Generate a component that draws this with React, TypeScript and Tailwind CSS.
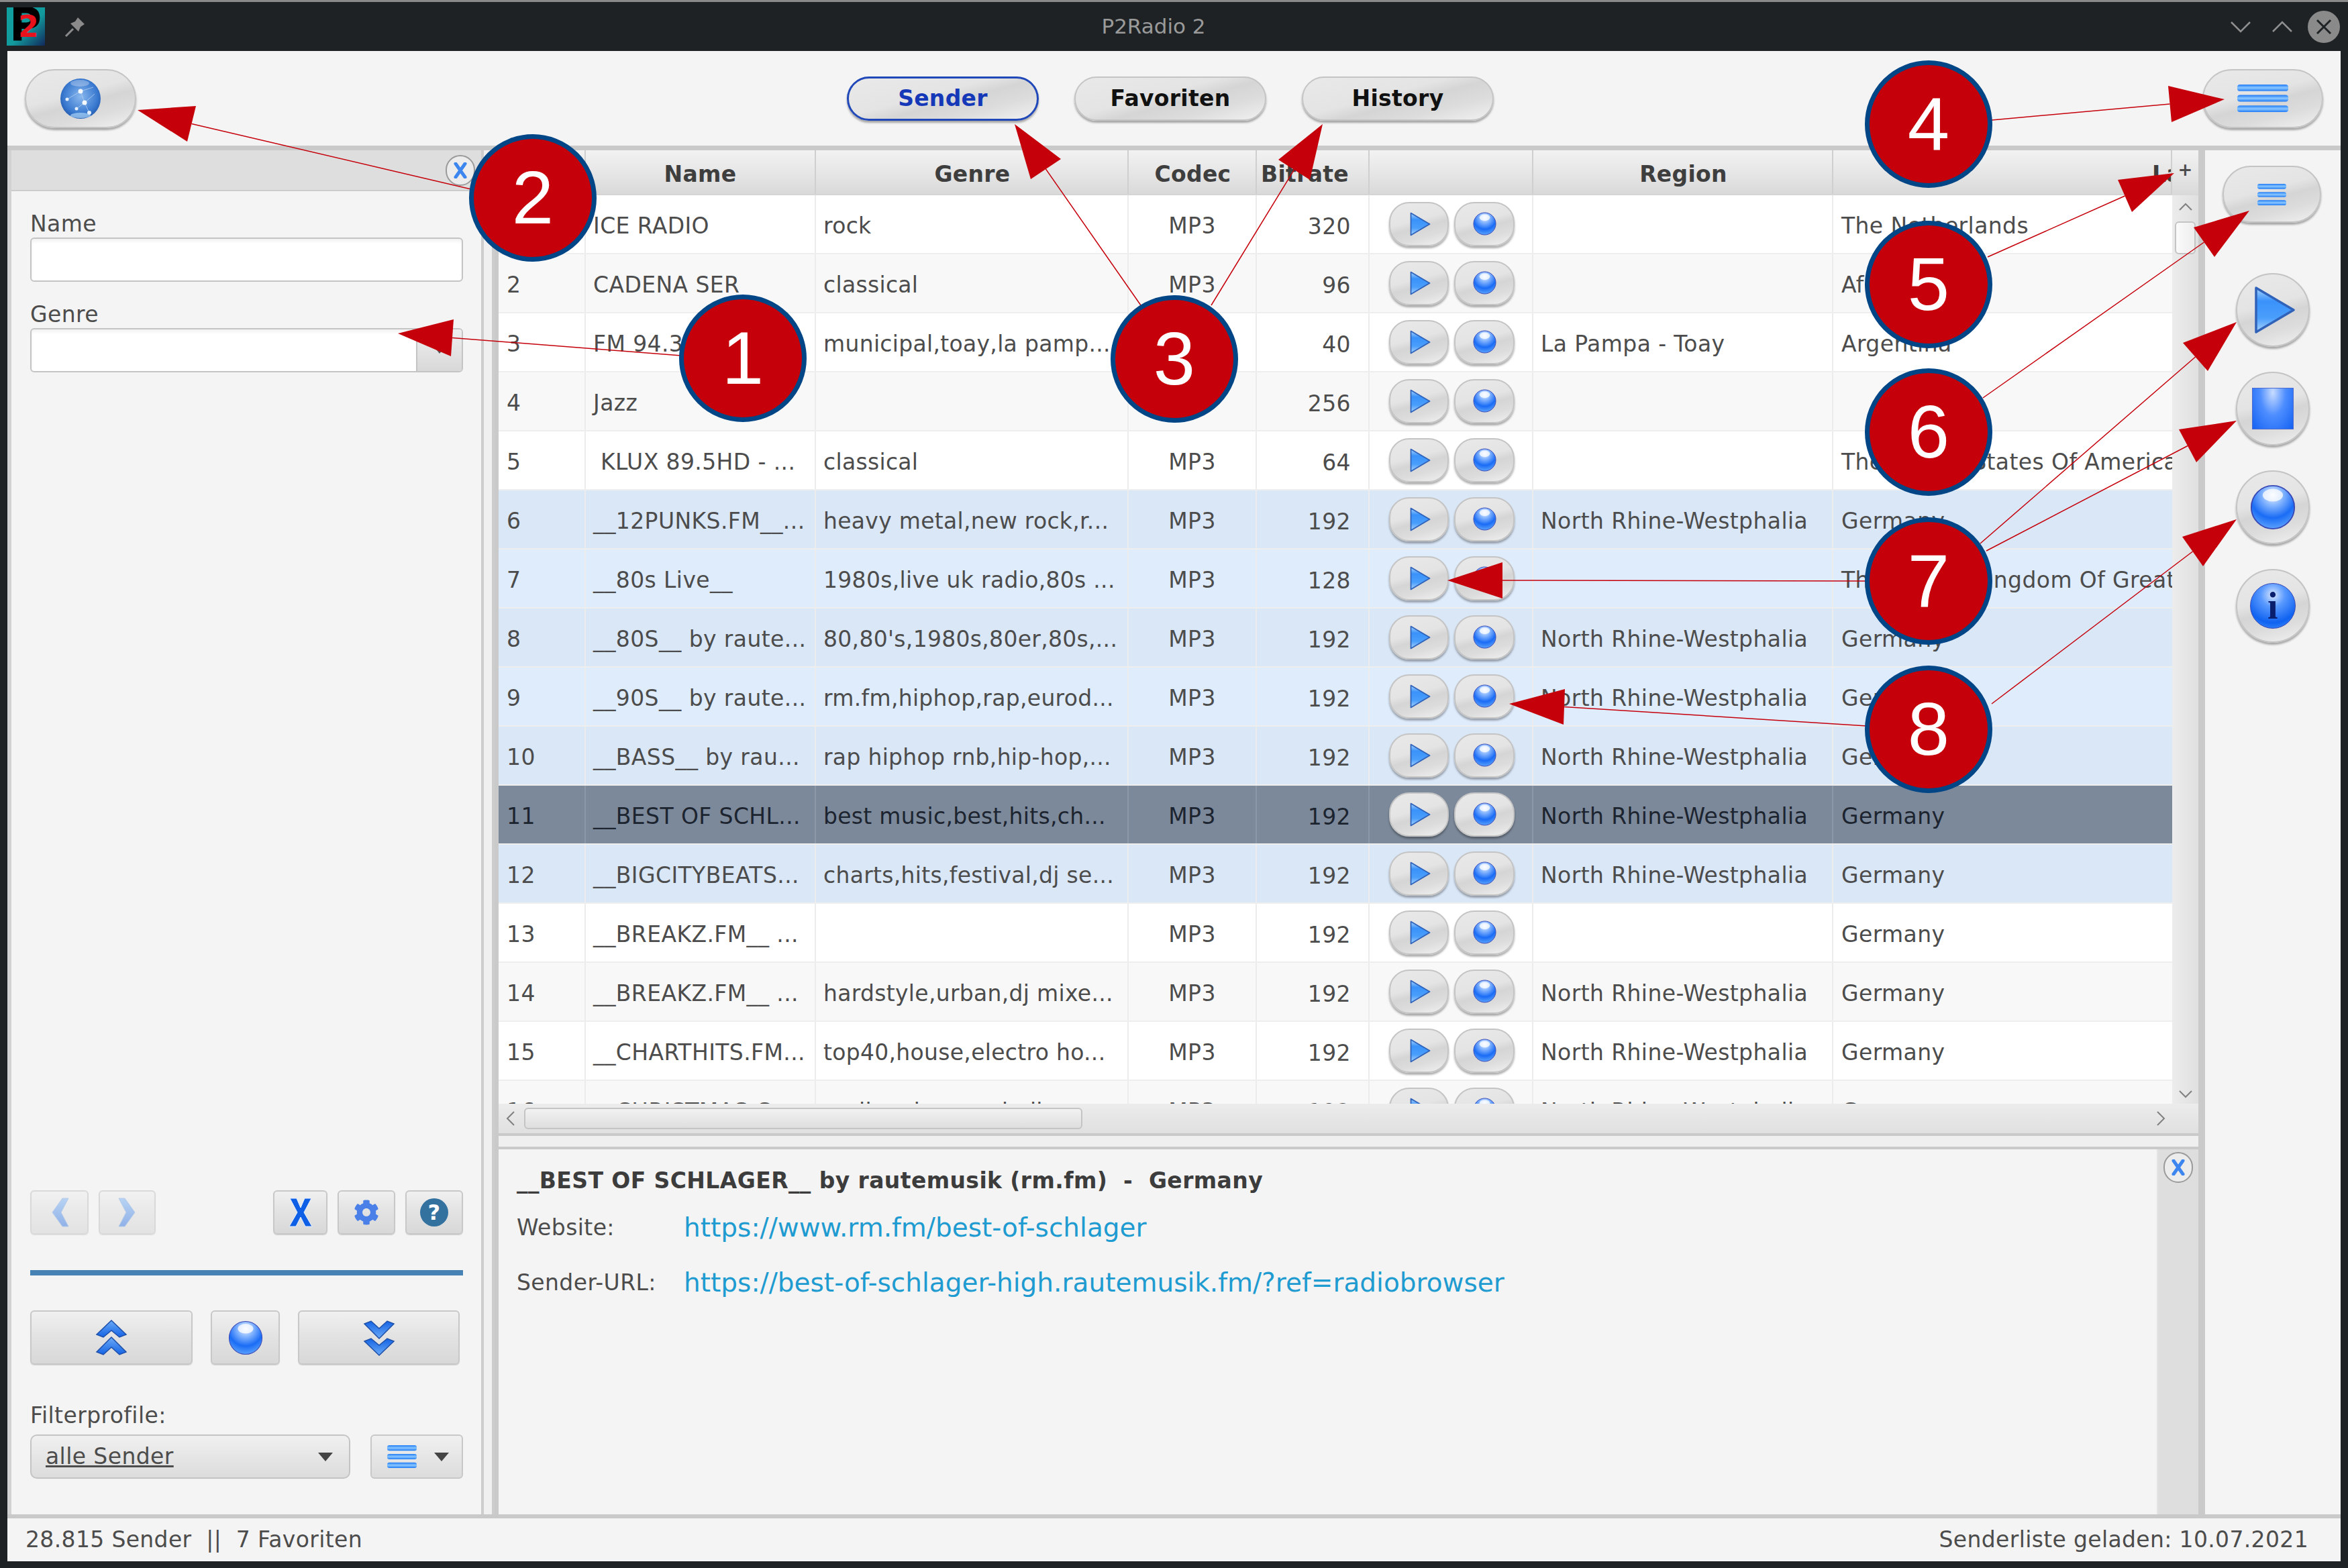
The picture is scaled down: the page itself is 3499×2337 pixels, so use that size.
import React from "react";
import { FaCog } from "react-icons/fa";

const F = "font-['DejaVu_Sans',sans-serif]";

const GLASS =
  "bg-[linear-gradient(165deg,#e9e9e9_0%,#e4e4e4_42%,#d5d5d5_56%,#dcdcdc_74%,#f1f1f1_100%)] border-2 border-[#c4c4c4] shadow-[0_3px_3px_rgba(0,0,0,0.32)]";
const SQUARE =
  "bg-[linear-gradient(180deg,#f0f0f0_0%,#e2e2e2_50%,#d8d8d8_100%)] border-2 border-[#c8c8c8] rounded-[6px] shadow-[0_1px_1px_rgba(0,0,0,0.15)] flex items-center justify-center";

function Defs() {
  return (
    <svg className="absolute w-0 h-0">
      <defs>
        <radialGradient id="ball" cx="50%" cy="22%" r="85%">
          <stop offset="0%" stopColor="#eef4ff" />
          <stop offset="28%" stopColor="#86b6ff" />
          <stop offset="62%" stopColor="#1a6cf5" />
          <stop offset="100%" stopColor="#6cb0ff" />
        </radialGradient>
        <radialGradient id="globe" cx="50%" cy="45%" r="60%">
          <stop offset="0%" stopColor="#8ab8ee" />
          <stop offset="70%" stopColor="#3a7ad0" />
          <stop offset="100%" stopColor="#1d54a8" />
        </radialGradient>
        <linearGradient id="play" x1="0" y1="0" x2="0" y2="1">
          <stop offset="0%" stopColor="#a8d4ff" />
          <stop offset="30%" stopColor="#3a92fa" />
          <stop offset="68%" stopColor="#4a9efb" />
          <stop offset="100%" stopColor="#a8d4ff" />
        </linearGradient>
        <linearGradient id="bar" x1="0" y1="0" x2="0" y2="1">
          <stop offset="0%" stopColor="#1f7bf5" />
          <stop offset="50%" stopColor="#8cc8ff" />
          <stop offset="100%" stopColor="#1f7bf5" />
        </linearGradient>
        <linearGradient id="chev" x1="0" y1="0" x2="0" y2="1">
          <stop offset="0%" stopColor="#6aaaf7" />
          <stop offset="100%" stopColor="#1463e4" />
        </linearGradient>
        <linearGradient id="teal" x1="0" y1="0" x2="1" y2="1">
          <stop offset="0%" stopColor="#10a0a0" />
          <stop offset="55%" stopColor="#129a9c" />
          <stop offset="100%" stopColor="#12285c" />
        </linearGradient>
      </defs>
    </svg>
  );
}

function Ball({ s = 35, className = "" }: { s?: number; className?: string }) {
  return (
    <svg width={s} height={s} viewBox="0 0 36 36" className={className}>
      <circle cx="18" cy="18" r="17" fill="url(#ball)" stroke="#3a48b4" strokeWidth="1" />
      <ellipse cx="18" cy="8.5" rx="8" ry="5" fill="#ffffff" opacity="0.75" />
    </svg>
  );
}

function Play({ w = 31, h = 36 }: { w?: number; h?: number }) {
  return (
    <svg width={w} height={h} viewBox="0 0 62 72">
      <path d="M3 3 L59 36 L3 69 Z" fill="url(#play)" stroke="#2f62b8" strokeWidth="3.5" strokeLinejoin="round" />
    </svg>
  );
}

function Bars({ w, h }: { w: number; h: number }) {
  const bh = h * 0.24;
  return (
    <svg width={w} height={h} viewBox={`0 0 ${w} ${h}`} preserveAspectRatio="none">
      {[0, (h - bh) / 2, h - bh].map((y) => (
        <rect key={y} x="0" y={y} width={w} height={bh} rx={bh / 2.5} fill="url(#bar)" />
      ))}
    </svg>
  );
}

function CloseSmall({ className = "" }: { className?: string }) {
  return (
    <div className={"w-[44px] h-[46px] rounded-full border-2 border-[#9a9a9a] bg-[#ececec] flex items-center justify-center " + className}>
      <svg width="20" height="24" viewBox="0 0 20 24">
        <path d="M3 2 L17 22 M17 2 L3 22" stroke="#3d86ef" strokeWidth="5" strokeLinecap="round" />
      </svg>
    </div>
  );
}

function Chevron({ dir, pale }: { dir: "l" | "r"; pale?: boolean }) {
  return (
    <svg width="28" height="46" viewBox="0 0 28 46" className={pale ? "opacity-70" : ""}>
      <path
        d={dir === "l" ? "M18 2 L27 2 L16 23 L27 44 L18 44 L3 23 Z" : "M10 2 L1 2 L12 23 L1 44 L10 44 L25 23 Z"}
        fill="url(#chev)"
        stroke="#6a9be0"
      />
    </svg>
  );
}

function DoubleChev({ up }: { up?: boolean }) {
  return (
    <svg width="48" height="54" viewBox="0 0 48 54" className={up ? "" : "rotate-180"}>
      <path d="M24 1 L46 22 L36 26 L24 16 L12 26 L2 22 Z" fill="url(#chev)" stroke="#1d4fa8" strokeWidth="1.5" />
      <path d="M24 26 L46 48 L36 52 L24 41 L12 52 L2 48 Z" fill="url(#chev)" stroke="#1d4fa8" strokeWidth="1.5" />
    </svg>
  );
}

const DE = "North Rhine-Westphalia";
type Row = [string, string, string, string, string, string, string];
const rows: Row[] = [
  ["1", "ICE RADIO", "rock", "MP3", "320", "", "The Netherlands"],
  ["2", "CADENA SER", "classical", "MP3", "96", "", "Afghanistan"],
  ["3", "FM 94.3 Toay", "municipal,toay,la pamp...", "MP3", "40", "La Pampa - Toay", "Argentina"],
  ["4", "Jazz", "", "MP3", "256", "", ""],
  ["5", "\u00a0KLUX 89.5HD - ...", "classical", "MP3", "64", "", "The United States Of America"],
  ["6", "__12PUNKS.FM__...", "heavy metal,new rock,r...", "MP3", "192", DE, "Germany"],
  ["7", "__80s Live__", "1980s,live uk radio,80s ...", "MP3", "128", "", "The United Kingdom Of Great Britain"],
  ["8", "__80S__ by raute...", "80,80's,1980s,80er,80s,...", "MP3", "192", DE, "Germany"],
  ["9", "__90S__ by raute...", "rm.fm,hiphop,rap,eurod...", "MP3", "192", DE, "Germany"],
  ["10", "__BASS__ by rau...", "rap hiphop rnb,hip-hop,...", "MP3", "192", DE, "Germany"],
  ["11", "__BEST OF SCHL...", "best music,best,hits,ch...", "MP3", "192", DE, "Germany"],
  ["12", "__BIGCITYBEATS...", "charts,hits,festival,dj se...", "MP3", "192", DE, "Germany"],
  ["13", "__BREAKZ.FM__ ...", "", "MP3", "192", "", "Germany"],
  ["14", "__BREAKZ.FM__ ...", "hardstyle,urban,dj mixe...", "MP3", "192", DE, "Germany"],
  ["15", "__CHARTHITS.FM...", "top40,house,electro ho...", "MP3", "192", DE, "Germany"],
  ["16", "__CHRISTMAS C...", "mall,rock,xmas,bell...", "MP3", "192", DE, "Germany"],
];

function rowBg(n: number) {
  if (n === 11) return "bg-[#7c899a] text-[#1c2430]";
  const blue = n >= 6 && n <= 12;
  if (blue) return n % 2 === 0 ? "bg-[#dae7f7] text-[#4c4c4c]" : "bg-[#dfecfc] text-[#4c4c4c]";
  return n % 2 === 0 ? "bg-[#f8f8f8] text-[#4c4c4c]" : "bg-white text-[#4c4c4c]";
}

const LINE = "border-r-2 border-[#ececec]";

function TableRow({ r }: { r: Row }) {
  const n = Number(r[0]);
  const line = n === 11 ? "border-r-2 border-[#8c98a8]" : LINE;
  const cell = " h-full flex items-center pt-[5px] whitespace-pre overflow-hidden ";
  return (
    <div className={"flex h-[88px] shrink-0 items-center border-b-2 border-[#eeeeee] text-[33px] tracking-[0.4px] " + rowBg(n)}>
      <div className={"w-[130px] pl-[12px]" + cell + line}>{r[0]}</div>
      <div className={"w-[343px] pl-[11px]" + cell + line}>{r[1]}</div>
      <div className={"w-[466px] pl-[11px] tracking-[0.3px]" + cell + line}>{r[2]}</div>
      <div className={"w-[191px] justify-center" + cell + line}>{r[3]}</div>
      <div className={"w-[168px] justify-end pr-[26px] pt-[8px] h-full flex items-center " + line}>{r[4]}</div>
      <div className={"w-[244px] h-full flex items-center gap-[8px] pl-[29px] pb-[1px] " + line}>
        <div className={"w-[89px] h-[66px] rounded-[30px] flex items-center justify-center pl-[3px] " + GLASS}>
          <Play />
        </div>
        <div className={"w-[90px] h-[66px] rounded-[30px] flex items-center justify-center " + GLASS}>
          <Ball />
        </div>
      </div>
      <div className={"w-[447px] pl-[11px]" + cell + line}>{r[5]}</div>
      <div className={"flex-1 min-w-0 pl-[12px]" + cell}>{r[6]}</div>
    </div>
  );
}

const HEADBG = "bg-[linear-gradient(180deg,#f2f2f2_0%,#e4e4e4_60%,#d9d9d9_100%)]";
const HEAD = HEADBG + " border-r-2 border-[#cfcfcf] flex items-center h-full pt-[7px]";

function Header() {
  return (
    <div className="flex h-[67px] shrink-0 font-bold text-[33px] tracking-[0.3px] text-[#3e3e3e] border-b-2 border-[#d4d4d4]">
      <div className={"w-[130px] " + HEAD} />
      <div className={"w-[343px] justify-center " + HEAD}>Name</div>
      <div className={"w-[466px] justify-center pl-[2px] " + HEAD}>Genre</div>
      <div className={"w-[191px] justify-center pl-[2px] " + HEAD}>Codec</div>
      <div className={"w-[168px] justify-start pl-[6px] " + HEAD}>Bitrate</div>
      <div className={"w-[244px] " + HEAD} />
      <div className={"w-[447px] justify-center pl-[2px] " + HEAD}>Region</div>
      <div className={"flex-1 min-w-0 overflow-hidden pl-[475px] whitespace-nowrap " + HEAD}>Land</div>
    </div>
  );
}

type Arrow = { tip: [number, number]; a: [number, number]; b: [number, number]; tail: [number, number] };
const arrows: Arrow[] = [
  { tip: [593, 497], a: [676, 476], b: [672, 531], tail: [1015, 530] },
  { tip: [205, 164], a: [292, 158], b: [279, 211], tail: [702, 282] },
  { tip: [1512, 185], a: [1581, 237], b: [1536, 267], tail: [1700, 455] },
  { tip: [1971, 185], a: [1905, 238], b: [1952, 268], tail: [1805, 455] },
  { tip: [3315, 148], a: [3231, 128], b: [3236, 182], tail: [2968, 179] },
  { tip: [3240, 258], a: [3156, 268], b: [3177, 316], tail: [2962, 383] },
  { tip: [3352, 314], a: [3269, 339], b: [3300, 383], tail: [2955, 593] },
  { tip: [3333, 480], a: [3253, 511], b: [3290, 553], tail: [2951, 810] },
  { tip: [3333, 627], a: [3247, 640], b: [3273, 689], tail: [2960, 821] },
  { tip: [2157, 865], a: [2239, 838], b: [2239, 892], tail: [2782, 866] },
  { tip: [3333, 774], a: [3252, 800], b: [3283, 844], tail: [2968, 1049] },
  { tip: [2249, 1049], a: [2332, 1027], b: [2330, 1080], tail: [2782, 1082] },
];

const badges: [string, number, number][] = [
  ["1", 1107, 534],
  ["2", 794, 295],
  ["3", 1750, 535],
  ["4", 2874, 185],
  ["5", 2874, 424],
  ["6", 2874, 644],
  ["7", 2874, 866],
  ["8", 2874, 1087],
];

function Annotations() {
  return (
    <>
      <svg className="absolute left-0 top-0 pointer-events-none" width="3499" height="2337">
        {arrows.map((ar, i) => (
          <g key={i}>
            <line
              x1={ar.tail[0]}
              y1={ar.tail[1]}
              x2={(ar.a[0] + ar.b[0]) / 2}
              y2={(ar.a[1] + ar.b[1]) / 2}
              stroke="#c5000b"
              strokeWidth="1.5"
            />
            <polygon points={`${ar.tip.join(",")} ${ar.a.join(",")} ${ar.b.join(",")}`} fill="#c5000b" />
          </g>
        ))}
      </svg>
      {badges.map(([t, x, y]) => (
        <div
          key={t}
          style={{ left: x - 95, top: y - 95 }}
          className="absolute w-[190px] h-[190px] rounded-full bg-[#c5000b] border-[7px] border-[#004586] flex items-center justify-center text-white text-[112px] leading-none font-['Liberation_Sans',sans-serif]"
        >
          {t}
        </div>
      ))}
    </>
  );
}

export default function App() {
  return (
    <div className={"relative w-[3499px] h-[2337px] overflow-hidden bg-[#1e2225] flex flex-col " + F}>
      <Defs />
      {/* title bar */}
      <div className="h-[76px] shrink-0 flex items-center border-t-[3px] border-[#8a8a8a] relative pl-[10px] pr-[12px]">
        <svg width="57" height="57" viewBox="0 0 57 57">
          <rect width="57" height="57" fill="url(#teal)" />
          <text x="4" y="50" fontFamily="DejaVu Sans" fontWeight="bold" fontSize="70" textLength="48" lengthAdjust="spacingAndGlyphs" fill="#000">P</text>
          <text x="17" y="44" fontFamily="DejaVu Sans" fontWeight="bold" fontSize="44" fill="#e8121c">2</text>
        </svg>
        <svg width="34" height="34" viewBox="0 0 34 34" className="ml-[28px]">
          <path d="M21 3 L31 13 L25 17 L22 24 L10 12 L17 9 Z" fill="#8b8b8b" />
          <path d="M14 20 L3 31" stroke="#8b8b8b" strokeWidth="3" />
        </svg>
        <div className="flex-1 text-center text-[31px] text-[#9a9a9a] pr-[14px]">P2Radio 2</div>
        <div className="flex items-center">
          <svg width="32" height="20" viewBox="0 0 32 20"><path d="M2 3 L16 17 L30 3" fill="none" stroke="#8f8f8f" strokeWidth="2.5" /></svg>
          <svg width="32" height="20" viewBox="0 0 32 20" className="ml-[30px]"><path d="M2 17 L16 3 L30 17" fill="none" stroke="#8f8f8f" strokeWidth="2.5" /></svg>
          <div className="ml-[22px] w-[48px] h-[48px] rounded-full bg-[#8a8a8a] flex items-center justify-center">
            <svg width="26" height="26" viewBox="0 0 26 26"><path d="M3 3 L23 23 M23 3 L3 23" stroke="#1e2225" strokeWidth="3" /></svg>
          </div>
        </div>
      </div>

      <div className="mx-[11px] flex-1 min-h-0 bg-[#f4f4f4] flex flex-col">
        {/* toolbar */}
        <div className="h-[148px] shrink-0 flex items-center px-[26px] border-b-[7px] border-[#c9c9c9]">
          <div className={"w-[166px] h-[88px] rounded-[44px] flex items-center justify-center " + GLASS}>
            <svg width="62" height="62" viewBox="0 0 62 62">
              <circle cx="31" cy="31" r="30" fill="url(#globe)" />
              <path d="M11 32 L31 20 L37 37 L25 46 M31 20 L50 14 M37 37 L52 24 M37 37 L44 52" stroke="#bcd6f5" strokeWidth="1" opacity="0.7" fill="none" />
              <circle cx="31" cy="20" r="3.5" fill="#f4f8ff" />
              <circle cx="37" cy="37" r="3.5" fill="#f4f8ff" />
              <circle cx="11" cy="32" r="2.5" fill="#e4efff" />
              <circle cx="25" cy="46" r="2.5" fill="#e4efff" />
              <circle cx="44" cy="52" r="3" fill="#e4efff" />
              <ellipse cx="30" cy="8" rx="14" ry="5" fill="#ffffff" opacity="0.3" />
              <ellipse cx="31" cy="56" rx="15" ry="4" fill="#bfe4ff" opacity="0.6" />
            </svg>
          </div>
          <div className="ml-[1059px] flex gap-[53px] font-bold text-[33px] tracking-[0.3px] text-[#111111]">
            <div className={"w-[286px] h-[66px] rounded-[33px] flex items-center justify-center text-[#1538b8] " + GLASS + " !border-[3px] !border-[#2048b8]"}>Sender</div>
            <div className={"w-[286px] h-[66px] rounded-[33px] flex items-center justify-center " + GLASS}>Favoriten</div>
            <div className={"w-[286px] h-[66px] rounded-[33px] flex items-center justify-center " + GLASS}>History</div>
          </div>
          <div className={"ml-auto w-[180px] h-[88px] rounded-[44px] flex items-center justify-center " + GLASS}>
            <Bars w={76} h={41} />
          </div>
        </div>

        {/* main */}
        <div className="flex-1 min-h-0 flex text-[#4c4c4c] text-[33px] tracking-[0.4px]">
          {/* left panel */}
          <div className="w-[706px] shrink-0 border-l-[6px] border-[#d2d2d2] flex flex-col">
            <div className="h-[61px] shrink-0 bg-[#dedede] border-b-2 border-[#cccccc] flex items-center justify-end pr-[9px]">
              <CloseSmall />
            </div>
            <div className="flex-1 min-h-0 flex flex-col pl-[28px] pr-[27px] pb-[53px]">
              <div className="mt-[29px] h-[40px] leading-[40px]">Name</div>
              <div className="h-[66px] rounded-[6px] border-2 border-[#c4c4c4] bg-white shadow-[inset_0_4px_4px_rgba(0,0,0,0.05)]" />
              <div className="mt-[29px] h-[40px] leading-[40px]">Genre</div>
              <div className="h-[66px] rounded-[6px] border-2 border-[#c4c4c4] bg-white shadow-[inset_0_4px_4px_rgba(0,0,0,0.05)] flex justify-end overflow-hidden">
                <div className="w-[68px] h-full border-l-2 border-[#c4c4c4] bg-[linear-gradient(180deg,#efefef,#d8d8d8)] flex items-center justify-center">
                  <div className="w-0 h-0 border-x-[8px] border-x-transparent border-t-[10px] border-t-[#555555]" />
                </div>
              </div>

              <div className="mt-auto flex">
                <div className={"w-[87px] h-[66px] opacity-60 " + SQUARE}><Chevron dir="l" pale /></div>
                <div className={"ml-[15px] w-[85px] h-[66px] opacity-60 " + SQUARE}><Chevron dir="r" pale /></div>
                <div className={"ml-auto w-[81px] h-[66px] " + SQUARE}>
                  <svg width="38" height="44" viewBox="0 0 38 44">
                    <path d="M3 1 L13 1 L19 15 L25 1 L35 1 L24 22 L36 43 L26 43 L19 29 L12 43 L2 43 L14 22 Z" fill="#0e5fe6" stroke="#eaf2ff" strokeWidth="1" />
                  </svg>
                </div>
                <div className={"ml-[15px] w-[86px] h-[66px] " + SQUARE}>
                  <FaCog className="text-[#4a80e8] w-[38px] h-[42px]" />
                </div>
                <div className={"ml-[15px] w-[86px] h-[66px] " + SQUARE}>
                  <div className="w-[42px] h-[42px] rounded-full bg-[#33719f] text-white font-bold text-[32px] leading-[42px] text-center">?</div>
                </div>
              </div>

              <div className="mt-[53px] h-[8px] bg-[#4682b4] shrink-0" />

              <div className="mt-[52px] flex gap-[27px]">
                <div className={"w-[242px] h-[81px] " + SQUARE}><DoubleChev up /></div>
                <div className={"w-[103px] h-[81px] " + SQUARE}>
                  <svg width="52" height="52" viewBox="0 0 36 36">
                    <circle cx="18" cy="18" r="17" fill="url(#ball)" stroke="#3a48b4" strokeWidth="0.7" />
                    <ellipse cx="18" cy="8.5" rx="8" ry="5" fill="#ffffff" opacity="0.75" />
                  </svg>
                </div>
                <div className={"w-[241px] h-[81px] " + SQUARE}><DoubleChev /></div>
              </div>

              <div className="mt-[56px] h-[40px] leading-[40px]">Filterprofile:</div>
              <div className="mt-[8px] flex justify-between">
                <div className="w-[477px] h-[66px] rounded-[10px] border-2 border-[#c4c4c4] bg-[linear-gradient(180deg,#f0f0f0,#dcdcdc)] flex items-center pl-[21px] pr-[24px]">
                  <span className="underline underline-offset-2">alle Sender</span>
                  <div className="ml-auto w-0 h-0 border-x-[11px] border-x-transparent border-t-[13px] border-t-[#444444]" />
                </div>
                <div className="w-[138px] h-[66px] rounded-[6px] border-2 border-[#c8c8c8] bg-[linear-gradient(180deg,#f0f0f0,#dcdcdc)] flex items-center pl-[23px]">
                  <Bars w={44} h={34} />
                  <div className="ml-[26px] w-0 h-0 border-x-[11px] border-x-transparent border-t-[13px] border-t-[#444444]" />
                </div>
              </div>
            </div>
          </div>

          {/* splitter */}
          <div className="w-[20px] shrink-0 bg-[#f0f0f0] border-l-[4px] border-r-[4px] border-[#cdcdcd]" />

          {/* center */}
          <div className="w-[2549px] shrink-0 flex flex-col border-l-[6px] border-r-[10px] border-[#cacaca]">
            <div className="h-[1465px] shrink-0 flex flex-col">
              <div className="flex-1 min-h-0 flex">
                <div className="w-[2494px] shrink-0 flex flex-col overflow-hidden">
                  <Header />
                  {rows.map((r) => (
                    <TableRow key={r[0]} r={r} />
                  ))}
                </div>
                <div className="flex-1 min-h-0 flex flex-col bg-[linear-gradient(90deg,#ececec,#e0e0e0)] items-center">
                  <div className={"w-full h-[67px] shrink-0 flex justify-center pt-[16px] text-[#4c4c4c] font-bold text-[26px] leading-[26px] " + HEADBG}>+</div>
                  <svg width="22" height="14" viewBox="0 0 22 14" className="mt-[10px] shrink-0"><path d="M2 12 L11 3 L20 12" fill="none" stroke="#808080" strokeWidth="2" /></svg>
                  <div className="mt-[15px] w-[31px] h-[49px] shrink-0 rounded-[6px] border-2 border-[#c4c4c4] bg-[linear-gradient(90deg,#fafafa,#eeeeee)]" />
                  <svg width="22" height="14" viewBox="0 0 22 14" className="mt-auto mb-[7px] shrink-0"><path d="M2 2 L11 11 L20 2" fill="none" stroke="#808080" strokeWidth="2" /></svg>
                </div>
              </div>
              <div className="h-[44px] shrink-0 bg-[linear-gradient(180deg,#ececec,#e0e0e0)] flex items-center pl-[10px] pr-[48px]">
                <svg width="16" height="24" viewBox="0 0 16 24"><path d="M13 2 L3 12 L13 22" fill="none" stroke="#808080" strokeWidth="2" /></svg>
                <div className="ml-[12px] w-[832px] h-[32px] rounded-[6px] border-2 border-[#c4c4c4] bg-[linear-gradient(180deg,#f2f2f2,#dedede)]" />
                <svg width="16" height="24" viewBox="0 0 16 24" className="ml-auto"><path d="M3 2 L13 12 L3 22" fill="none" stroke="#808080" strokeWidth="2" /></svg>
              </div>
            </div>
            <div className="h-[24px] shrink-0 bg-[#efefef] border-y-[4px] border-[#c9c9c9]" />
            <div className="flex-1 min-h-0 flex">
              <div className="w-[2473px] shrink-0 pl-[27px] pt-[27px] border-r-2 border-[#e4e4e4]">
                <div className="font-bold h-[40px] leading-[40px] whitespace-pre text-[#3c3c3c]">__BEST OF SCHLAGER__ by rautemusik (rm.fm)  -  Germany</div>
                <div className="mt-[28px] flex items-center h-[44px]">
                  <span className="w-[249px] shrink-0">Website:</span>
                  <span className="text-[#1e9bd0] text-[39px] tracking-normal">https://www.rm.fm/best-of-schlager</span>
                </div>
                <div className="mt-[38px] flex items-center h-[44px]">
                  <span className="w-[249px] shrink-0">Sender-URL:</span>
                  <span className="text-[#1e9bd0] text-[39px] tracking-normal">https://best-of-schlager-high.rautemusik.fm/?ref=radiobrowser</span>
                </div>
              </div>
              <div className="flex-1 bg-[#dedede] flex justify-center pt-[4px]">
                <CloseSmall />
              </div>
            </div>
          </div>

          {/* right sidebar */}
          <div className="flex-1 min-w-0 flex flex-col items-center pt-[23px] gap-[37px]">
            <div className={"w-[147px] h-[85px] rounded-[42px] mb-[38px] mr-[4px] flex items-center justify-center " + GLASS}>
              <Bars w={43} h={32} />
            </div>
            <div className={"w-[110px] h-[110px] rounded-full flex items-center justify-center pl-[6px] " + GLASS}>
              <Play w={64} h={72} />
            </div>
            <div className={"w-[110px] h-[110px] rounded-full flex items-center justify-center " + GLASS}>
              <div className="w-[62px] h-[62px] bg-[radial-gradient(ellipse_at_50%_10%,#c8dcff_0%,#4d8dff_45%,#1462f2_100%)] border border-[#4a6ad0]" />
            </div>
            <div className={"w-[110px] h-[110px] rounded-full flex items-center justify-center " + GLASS}>
              <Ball s={68} />
            </div>
            <div className={"w-[110px] h-[110px] rounded-full flex items-center justify-center " + GLASS}>
              <div className="relative w-[68px] h-[68px] rounded-full bg-[radial-gradient(circle_at_50%_25%,#d8e6ff_0%,#5a9aff_30%,#0f62f0_70%,#4f9dff_100%)] border border-[#3a48b4] flex items-center justify-center text-[#0a1e6e] font-bold text-[56px] leading-none font-['Liberation_Serif',serif]">
                i
              </div>
            </div>
          </div>
        </div>

        {/* status */}
        <div className="h-[70px] shrink-0 border-t-[6px] border-[#c9c9c9] flex items-center justify-between pl-[27px] pr-[48px] text-[33px] tracking-[0.35px] text-[#4c4c4c]">
          <span className="whitespace-pre">28.815 Sender  ||  7 Favoriten</span>
          <span>Senderliste geladen: 10.07.2021</span>
        </div>
      </div>
      <div className="h-[10px] shrink-0" />
      <Annotations />
    </div>
  );
}
